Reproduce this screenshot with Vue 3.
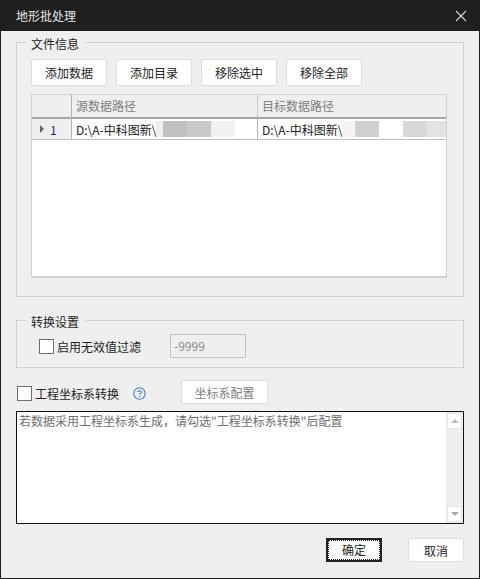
<script setup>
// 地形批处理对话框
const actions = ['添加数据', '添加目录', '移除选中', '移除全部']

const cells = [
  { id: 'src', text: 'D:\\A-中科图新\\', mask: [['#efefef', 7], ['#c0c0c0', 24], ['#c9c9c9', 24], ['#f1f1f1', 24]] },
  { id: 'dst', text: 'D:\\A-中科图新\\', mask: [['#f4f4f4', 13], ['#d0d0d0', 24], ['#ffffff', 24], ['#d8d8d8', 24], ['#e3e3e3', 20]] }
]
</script>

<template>
  <div class="dialog">
    <header class="titlebar">
      <span class="title">地形批处理</span>
      <svg class="close" width="12" height="12" viewBox="0 0 12 12">
        <path d="M1 1 L11 11 M11 1 L1 11" stroke="#d8d8d8" stroke-width="1.1" fill="none" />
      </svg>
    </header>

    <main class="body">
      <fieldset class="group group-file">
        <legend>文件信息</legend>
        <div class="actions">
          <button v-for="a in actions" :key="a" class="btn btn-action">{{ a }}</button>
        </div>
        <div class="table">
          <div class="th th-corner"></div>
          <div class="th">源数据路径</div>
          <div class="th th-last">目标数据路径</div>
          <div class="row-head">
            <i class="row-arrow"></i>
            <span>1</span>
          </div>
          <div v-for="c in cells" :key="c.id" class="td">
            <span class="path">{{ c.text }}</span>
            <span
              v-for="(m, i) in c.mask"
              :key="i"
              class="mask"
              :style="{ background: m[0], width: m[1] + 'px' }"
            ></span>
          </div>
        </div>
      </fieldset>

      <fieldset class="group group-convert">
        <legend>转换设置</legend>
        <div class="convert-row">
          <label class="check">
            <i class="box"></i>
            <span>启用无效值过滤</span>
          </label>
          <div class="value">-9999</div>
        </div>
      </fieldset>

      <div class="crs-row">
        <label class="check">
          <i class="box"></i>
          <span>工程坐标系转换</span>
        </label>
        <svg class="help" width="13" height="13" viewBox="0 0 13 13">
          <circle cx="6.5" cy="6.5" r="5.7" fill="none" stroke="#4a7fc4" stroke-width="1.1" />
          <path d="M4.6 5 C4.6 3.5 8.4 3.3 8.4 5.2 C8.4 6.4 6.5 6.3 6.5 7.8" fill="none" stroke="#4a7fc4" stroke-width="1.1" />
          <path d="M6.5 8.9 V10" stroke="#4a7fc4" stroke-width="1.1" />
        </svg>
        <button class="btn btn-crs">坐标系配置</button>
      </div>

      <div class="note">
        <p class="note-text">若数据采用工程坐标系生成，请勾选"工程坐标系转换"后配置</p>
        <div class="scroll">
          <span class="scroll-btn"><i class="tri tri-up"></i></span>
          <span class="scroll-btn"><i class="tri tri-down"></i></span>
        </div>
      </div>

      <footer class="footer">
        <button class="btn btn-ok"><span>确定</span></button>
        <button class="btn btn-cancel">取消</button>
      </footer>
    </main>
  </div>
</template>

<style scoped>
.dialog {
  width: 480px;
  height: 579px;
  box-sizing: border-box;
  display: flex;
  flex-direction: column;
  background: #efefef;
  border: 1px solid #1f1f1f;
  border-top: 0;
  font-family: "Noto Sans CJK SC", "Liberation Sans", sans-serif;
  font-size: 12px;
  color: #222;
}

.titlebar {
  height: 31px;
  flex: none;
  display: flex;
  align-items: center;
  justify-content: space-between;
  margin: 0 -1px;
  padding: 0 13px 0 16px;
  background: #1f1f1f;
}

.title {
  color: #e6e6e6;
}

.close {
  display: block;
}

.body {
  flex: 1;
  padding: 1px 15px 0;
  display: flex;
  flex-direction: column;
}

.group {
  margin: 0;
  min-width: 0;
  border: 1px solid #cfcfcf;
  padding: 0;
}

.group legend {
  margin-left: 9px;
  padding: 4px 7px 0 5px;
  line-height: 16px;
  font-size: 12px;
  color: #222;
}

.group-file {
  height: 265px;
  box-sizing: border-box;
  padding: 7px 14px 0;
}

.group-file legend {
  margin-left: -5px;
}

.actions {
  display: flex;
  gap: 9px;
}

.btn {
  font: inherit;
  color: #222;
  background: #fff;
  border: 1px solid #dcdcdc;
  border-radius: 2px;
  padding: 0;
  margin: 0;
}

.btn-action {
  width: 76px;
  height: 27px;
}

.table {
  display: grid;
  grid-template-columns: 39px 186px 1fr;
  grid-template-rows: 24px 21px 1fr;
  height: 184px;
  box-sizing: border-box;
  margin: 8px 2px 0 0;
  background: #fff;
  border: 1px solid #d2d2d2;
  border-bottom-width: 2px;
}

.th {
  background: #efefef;
  color: #808080;
  line-height: 22px;
  padding-left: 4px;
  border-left: 1px solid #b4b4b4;
  border-bottom: 2px solid #a6a6a6;
  box-sizing: border-box;
  overflow: hidden;
}

.th-corner {
  border-left: 0;
  padding: 0;
}

.th-last {
  border-left-color: #c8c8c8;
}

.row-head {
  display: flex;
  align-items: center;
  gap: 6px;
  padding-left: 8px;
  background: #efefef;
  color: #3a1f5c;
  border-bottom: 1px solid #bdbdbd;
  box-sizing: border-box;
}

.row-arrow {
  width: 0;
  height: 0;
  border-left: 4px solid #666;
  border-top: 4px solid transparent;
  border-bottom: 4px solid transparent;
}

.td {
  display: flex;
  align-items: center;
  padding-left: 4px;
  border-left: 1px solid #b4b4b4;
  border-bottom: 1px solid #bdbdbd;
  box-sizing: border-box;
  overflow: hidden;
  white-space: nowrap;
}

.path {
  flex: none;
  width: 80px;
  overflow: hidden;
}

.mask {
  flex: none;
  height: 16px;
}

.group-convert {
  margin-top: 13px;
  height: 58px;
  box-sizing: border-box;
}

.convert-row {
  display: flex;
  align-items: center;
  padding: 0 0 0 22px;
  margin-top: 4px;
}

.check {
  display: flex;
  align-items: center;
  gap: 3px;
}

.box {
  width: 15px;
  height: 15px;
  flex: none;
  box-sizing: border-box;
  background: #fff;
  border: 1px solid #6e6e6e;
  outline: 1px solid #fff;
  outline-offset: -2px;
}

.value {
  width: 76px;
  height: 24px;
  box-sizing: border-box;
  margin-left: 29px;
  padding-left: 3px;
  line-height: 22px;
  color: #8a8a8a;
  border: 1px solid #c4c4c4;
}

.crs-row {
  display: flex;
  align-items: center;
  height: 24px;
  margin-top: 12px;
  padding-left: 1px;
}

.crs-row .check {
  margin-top: 2px;
}

.help {
  margin: 2px 0 0 14px;
  flex: none;
}

.btn-crs {
  width: 87px;
  height: 24px;
  margin-left: 35px;
  color: #808080;
}

.note {
  display: flex;
  height: 113px;
  box-sizing: border-box;
  margin-top: 7px;
  background: #fff;
  border: 1px solid #111;
}

.note-text {
  flex: 1;
  margin: 0;
  padding: 1px 2px;
  line-height: 16px;
  color: #6e6e6e;
}

.scroll {
  width: 17px;
  flex: none;
  display: flex;
  flex-direction: column;
  justify-content: space-between;
  padding: 1px 1px;
  box-sizing: border-box;
  background: #efefef;
}

.scroll-btn {
  display: flex;
  align-items: center;
  justify-content: center;
  height: 16px;
  background: #fff;
  border: 1px solid #e4e4e4;
  box-sizing: border-box;
}

.tri {
  width: 0;
  height: 0;
  border-left: 4px solid transparent;
  border-right: 4px solid transparent;
}

.tri-up {
  border-bottom: 4px solid #bdbdbd;
}

.tri-down {
  border-top: 4px solid #a8a8a8;
}

.footer {
  display: flex;
  justify-content: flex-end;
  gap: 26px;
  margin-top: 14px;
}

.btn-ok,
.btn-cancel {
  width: 56px;
  height: 24px;
}

.btn-ok {
  border: 2px solid #222;
  border-radius: 0;
  padding: 0;
}

.btn-ok span {
  display: block;
  height: 100%;
  box-sizing: border-box;
  line-height: 18px;
  border: 1px dotted #222;
}
</style>

<style>
html,
body {
  margin: 0;
  overflow: hidden;
}
</style>
